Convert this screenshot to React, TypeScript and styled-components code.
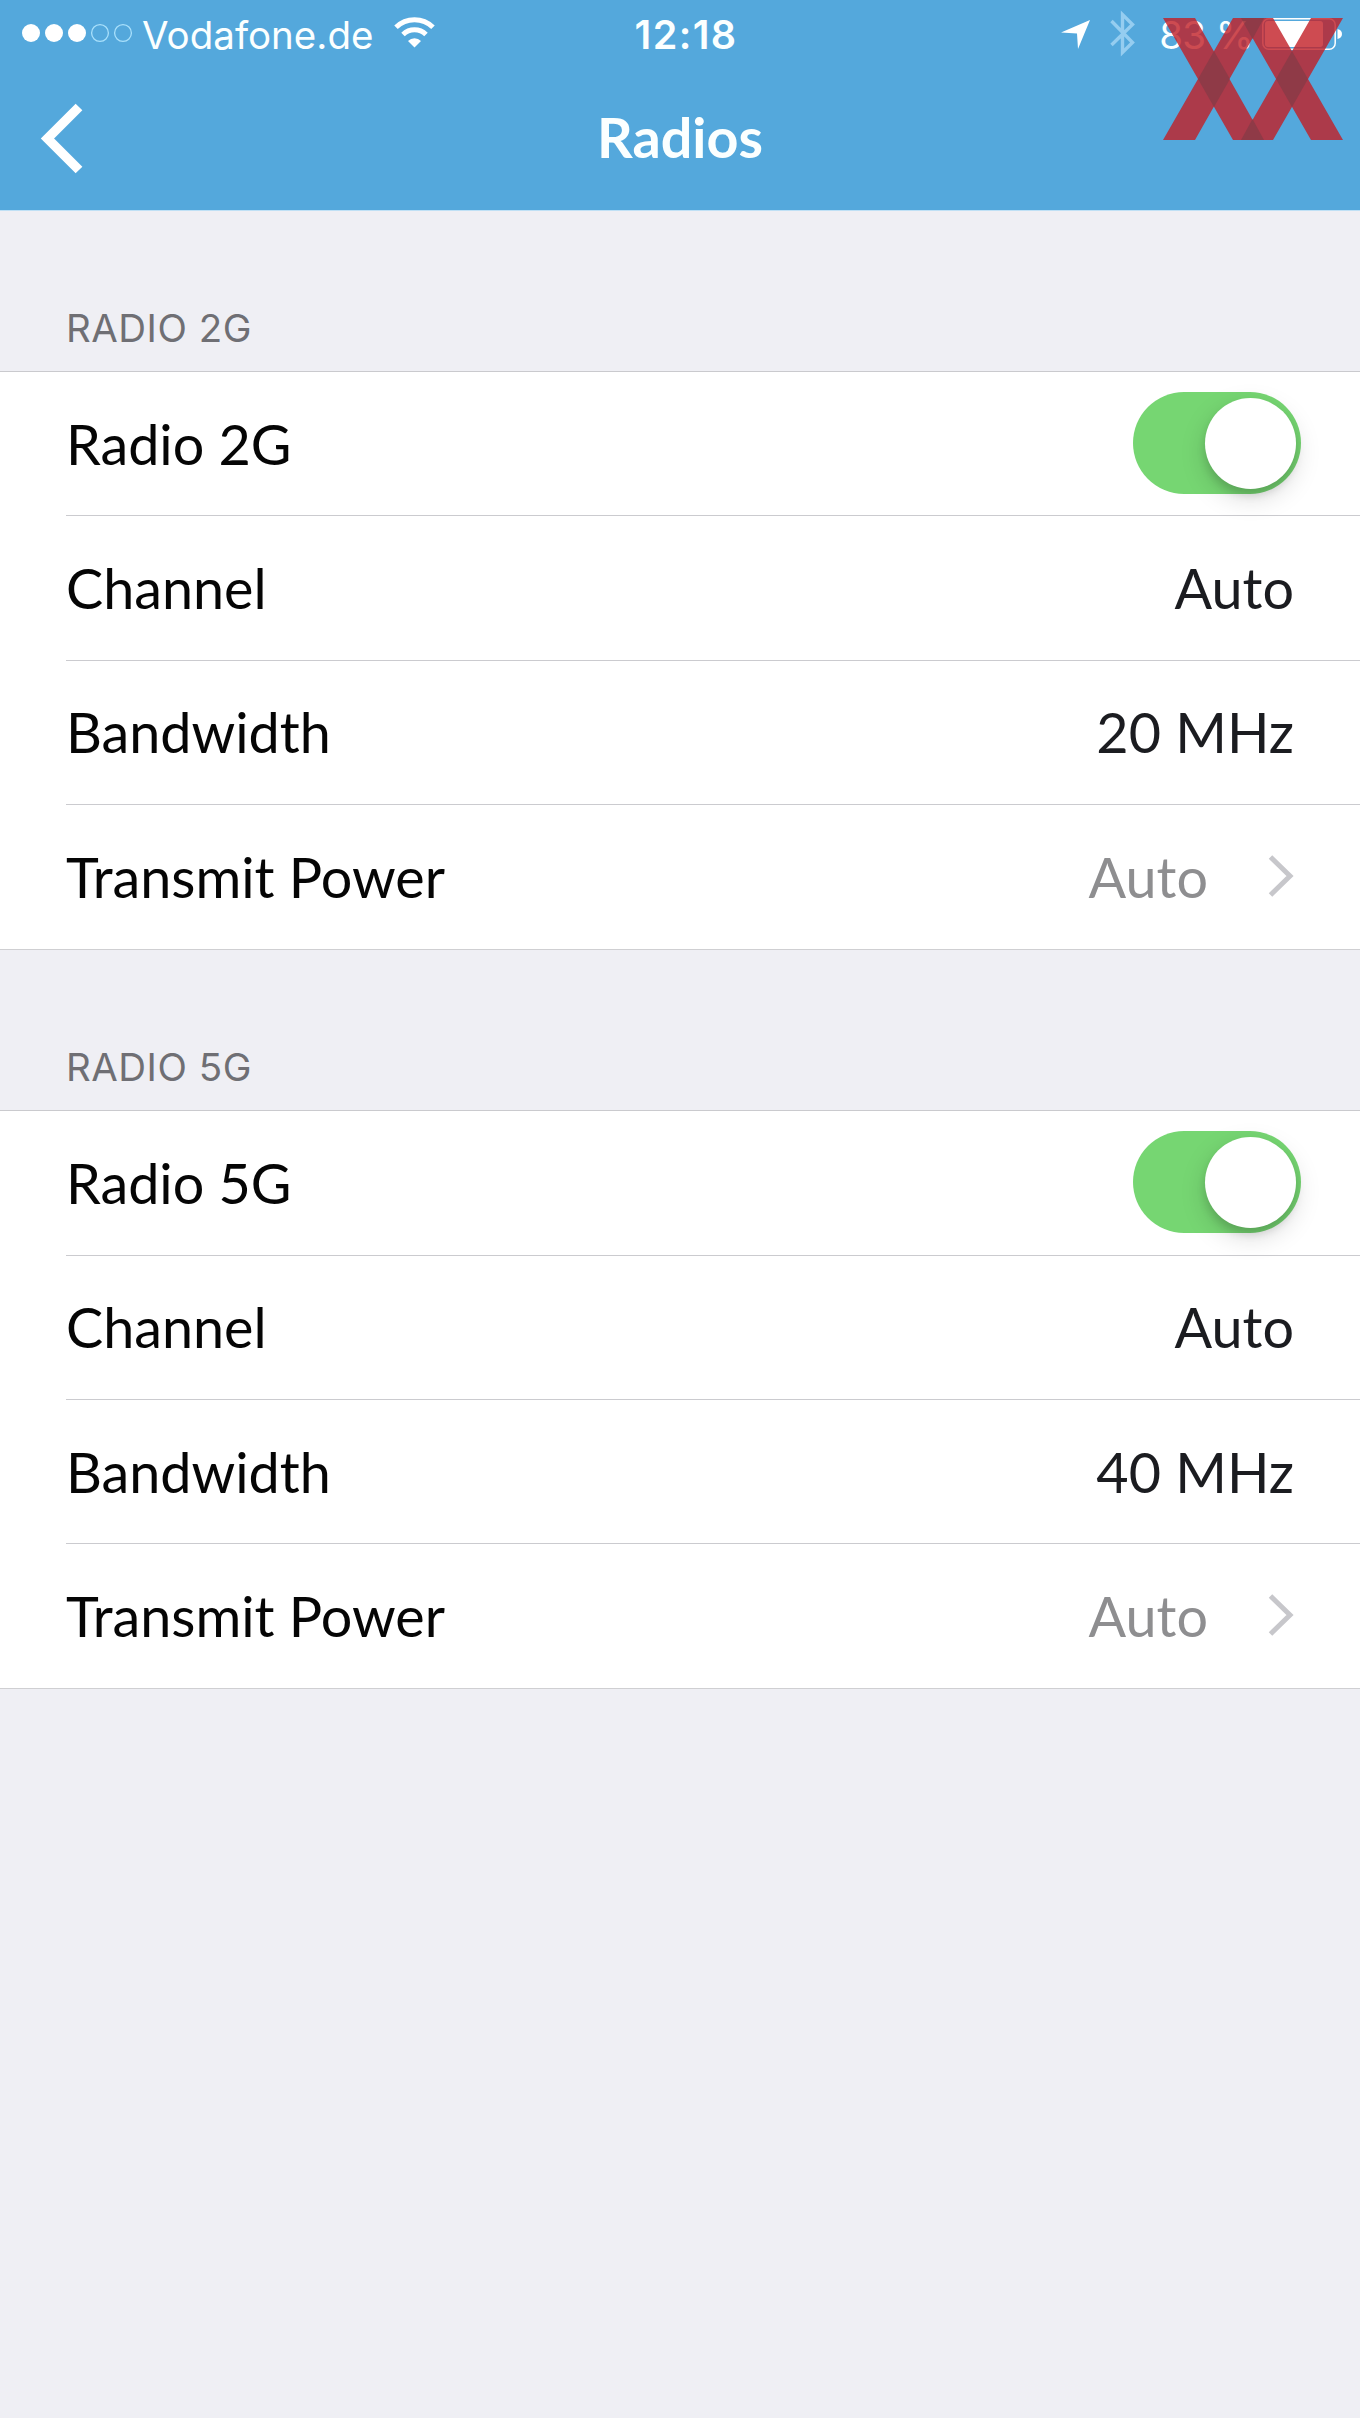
import React from "react";
import styled, { createGlobalStyle } from "styled-components";

const GlobalStyle = createGlobalStyle`
  html, body { margin: 0; padding: 0; background: #efeff4; }
  *, *::before, *::after { box-sizing: border-box; }
`;

const Screen = styled.div`
  position: relative;
  width: 1360px;
  height: 2418px;
  overflow: hidden;
  background: #efeff4;
  font-family: Lato, "Open Sans", sans-serif;
`;

const Header = styled.header`
  height: 211px;
  background: #54a8dc;
  border-bottom: 1px solid #bfe0f5;
  color: #fbffff;
`;

const StatusBar = styled.div`
  height: 69px;
  display: grid;
  grid-template-columns: 1fr auto 1fr;
  align-items: center;
  padding: 0 18px 0 22px;
  font: 400 38.5px/48px Inter, sans-serif;
`;

const Carrier = styled.div`
  display: flex;
  align-items: center;
`;

const CarrierName = styled.span`
  margin-left: 10px;
`;

const Clock = styled.time`
  font-size: 39.5px;
  font-weight: 600;
  letter-spacing: 1.4px;
  margin-left: 8px;
`;

const Indicators = styled.div`
  display: flex;
  align-items: center;
  justify-content: flex-end;
`;

const Percent = styled.span`
  margin-left: 24px;
  letter-spacing: -0.6px;
  white-space: pre;
`;

const Icon = styled.svg<{ $left?: number; $lift?: number }>`
  display: block;
  flex: none;
  margin-left: ${(p) => p.$left ?? 0}px;
  margin-bottom: ${(p) => p.$lift ?? 0}px;
  overflow: visible;
`;

const NavBar = styled.nav`
  height: 141px;
  display: grid;
  grid-template-columns: 1fr auto 1fr;
  padding: 0 40px;
`;

const BackButton = styled.button`
  justify-self: start;
  align-self: start;
  margin-top: 34px;
  padding: 0;
  border: 0;
  background: none;
`;

const Title = styled.h1`
  margin: 34px 0 0;
  font-size: 55.7px;
  line-height: 68px;
  font-weight: 700;
`;

const Watermark = styled.svg`
  position: absolute;
  left: 1162px;
  top: 18px;
`;

const SectionTitle = styled.h2<{ $height: number }>`
  height: ${(p) => p.$height}px;
  margin: 0;
  padding: 0 66px 19px;
  display: flex;
  align-items: flex-end;
  font: 400 38.5px/48px Inter, sans-serif;
  letter-spacing: 0.5px;
  color: #6f6f74;
`;

const List = styled.ul`
  margin: 0;
  padding: 0;
  list-style: none;
  background: #fff;
  border-top: 1px solid #cacace;
  border-bottom: 1px solid #cfcfd2;
`;

const Row = styled.li`
  height: 143.4px;
  margin-left: 66px;
  padding-right: 66px;
  display: flex;
  align-items: center;
  justify-content: space-between;
  & + & {
    height: 144.4px;
    border-top: 1px solid #cbcbcf;
  }
`;

const Label = styled.span`
  font-size: 55.7px;
  line-height: 68px;
  color: #050505;
`;

const Value = styled.span<{ $muted?: boolean }>`
  display: flex;
  align-items: center;
  font-size: 55.7px;
  line-height: 68px;
  color: ${(p) => (p.$muted ? "#8e8e90" : "#1b1c20")};
`;

const Switch = styled.button`
  width: 168px;
  height: 102px;
  margin: 0 -7px 1px 0;
  padding: 5.5px;
  border: 0;
  border-radius: 51px;
  background: #76d672;
  display: flex;
  justify-content: flex-end;
`;

const Knob = styled.span`
  width: 91px;
  height: 91px;
  border-radius: 50%;
  background: #fff;
  box-shadow: 0 9px 26px rgba(0, 0, 0, 0.15), 0 6px 8px rgba(0, 0, 0, 0.13);
`;

type Item = { label: string; value?: string; kind: "switch" | "value" | "link" };
type Section = { title: string; height: number; items: Item[] };

const radio = (band: string, width: string): Item[] => [
  { label: `Radio ${band}`, kind: "switch" },
  { label: "Channel", value: "Auto", kind: "value" },
  { label: "Bandwidth", value: width, kind: "value" },
  { label: "Transmit Power", value: "Auto", kind: "link" },
];

const sections: Section[] = [
  { title: "RADIO 2G", height: 160, items: radio("2G", "20 MHz") },
  { title: "RADIO 5G", height: 160.7, items: radio("5G", "40 MHz") },
];

const SignalDots = () => (
  <Icon $lift={3} width="110" height="18" viewBox="0 0 110 18">
    {[9, 32, 55].map((x) => (
      <circle key={x} cx={x} cy="9" r="9" fill="#fff" />
    ))}
    {[78, 101].map((x) => (
      <circle key={x} cx={x} cy="9" r="8.4" fill="none" stroke="#a9e0fb" strokeWidth="1.3" />
    ))}
  </Icon>
);

const Wifi = () => (
  <Icon $left={21} $lift={5} width="41" height="31" viewBox="0 0 41 31">
    <g fill="none" stroke="#fff" strokeWidth="5">
      <path d="M2 10.2 A26.5 26.5 0 0 1 39 10.2" />
      <path d="M9 17.5 A16.5 16.5 0 0 1 32 17.5" />
    </g>
    <path d="M20.5 30.5 L14 24 A9.2 9.2 0 0 1 27 24 Z" fill="#fff" />
  </Icon>
);

const Location = () => (
  <Icon width="29" height="29" viewBox="0 0 29 29">
    <path d="M29 0 L17 29 L16 13.5 L0 12.5 Z" fill="#fff" />
  </Icon>
);

const Bluetooth = () => (
  <Icon $left={20} $lift={2} width="25" height="45" viewBox="0 0 25 45">
    <path
      d="M1.5 10 L22.5 31.5 L12.5 41.5 V3.5 L22.5 13.5 L1.5 34"
      fill="none"
      stroke="#95cdf0"
      strokeWidth="3.4"
    />
  </Icon>
);

const Battery = () => (
  <Icon $left={9} $lift={2} width="80" height="32" viewBox="0 0 80 32">
    <rect x="0.8" y="0.8" width="72.4" height="30.4" rx="6" fill="none" stroke="#fff" strokeWidth="1.5" />
    <rect x="3" y="3" width="58" height="26" rx="3" fill="#fff" />
    <path d="M75.5 11 C81.5 12 81.5 20 75.5 21 Z" fill="#fff" />
  </Icon>
);

const Disclosure = () => (
  <Icon $left={60} $lift={2} width="26" height="42" viewBox="0 0 26 42">
    <path d="M2.5 2 L22 21 L2.5 40" fill="none" stroke="#c7c7cb" strokeWidth="5" />
  </Icon>
);

export default function App() {
  return (
    <Screen>
      <GlobalStyle />
      <Header>
        <StatusBar>
          <Carrier>
            <SignalDots />
            <CarrierName>Vodafone.de</CarrierName>
            <Wifi />
          </Carrier>
          <Clock>12:18</Clock>
          <Indicators>
            <Location />
            <Bluetooth />
            <Percent>83 %</Percent>
            <Battery />
          </Indicators>
        </StatusBar>
        <NavBar>
          <BackButton aria-label="Back">
            <Icon width="43" height="70" viewBox="0 0 43 70">
              <path d="M39 4 L7.5 35.5 L39 67" fill="none" stroke="#fff" strokeWidth="9.5" />
            </Icon>
          </BackButton>
          <Title>Radios</Title>
        </NavBar>
      </Header>
      <Watermark width="182" height="122" viewBox="0 0 182 122">
        <path
          fill="#c21e25"
          fillOpacity="0.8"
          d="M1 0H33L102 122H71Z M71 0H102L33 122H1Z M79 0H111L181 122H149Z M149 0H181L111 122H79Z"
        />
        <path
          fill="#3c3a42"
          fillOpacity="0.26"
          d="M52 33L68 61L52 89L36 61Z M130 33L146 61L130 89L114 61Z M79 0H102L90.5 21Z M79 122H102L90.5 101Z"
        />
      </Watermark>
      {sections.map((section) => (
        <section key={section.title}>
          <SectionTitle $height={section.height}>{section.title}</SectionTitle>
          <List>
            {section.items.map((item) => (
              <Row key={item.label}>
                <Label>{item.label}</Label>
                {item.kind === "switch" ? (
                  <Switch role="switch" aria-checked="true" aria-label={item.label}>
                    <Knob />
                  </Switch>
                ) : (
                  <Value $muted={item.kind === "link"}>
                    {item.value}
                    {item.kind === "link" && <Disclosure />}
                  </Value>
                )}
              </Row>
            ))}
          </List>
        </section>
      ))}
    </Screen>
  );
}
